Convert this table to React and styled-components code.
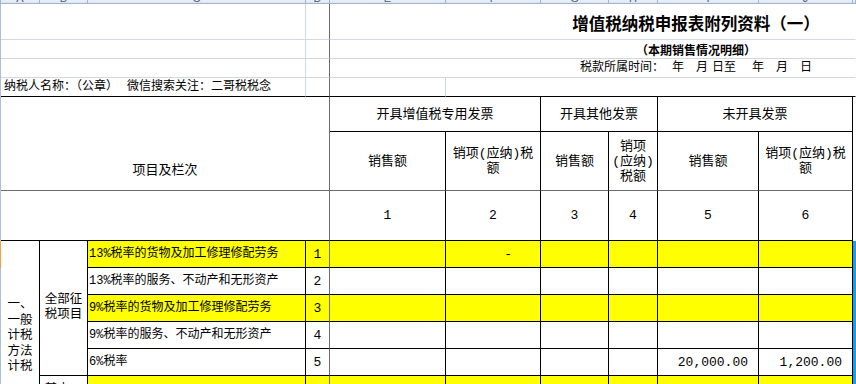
import React from "react";
import styled, { createGlobalStyle } from "styled-components";

const GRID = "#d0d7e5";
const INK = "#000";
const FREEZE = "#6b6b6b";
const YELLOW = "#ffff00";
const FONT = `"Liberation Mono", "Noto Sans CJK SC", sans-serif`;

const GlobalStyle = createGlobalStyle`
  html, body {
    margin: 0;
    padding: 0;
    background: #fff;
    overflow: hidden;
  }
  body {
    font-family: ${FONT};
    color: #000;
  }
`;

const Sheet = styled.div`
  width: 856px;
  height: 384px;
  overflow: hidden;
  display: grid;
  grid-template-columns: 1px 39px 48px 218px 24px 116px 95px 68px 49px 101px 94px 3px;
  grid-template-rows: 4px 36px 19px 19px 19px 35px 59px 50px 27px 27px 27px 27px 27px 40px;
`;

const Cell = styled.div`
  grid-column: ${(p) => p.$c};
  grid-row: ${(p) => p.$r};
  box-sizing: border-box;
  display: flex;
  align-items: center;
  justify-content: center;
  text-align: center;
  background: ${(p) => p.$bg || "#fff"};
  border-right: 1px solid ${(p) => p.$br || "transparent"};
  border-bottom: 1px solid ${(p) => p.$bb || "transparent"};
  font-size: 12px;
  line-height: 15px;
  white-space: nowrap;
  overflow: hidden;
`;

const ColHead = styled(Cell)`
  background: linear-gradient(#eaf0f7, #dce5f0);
  border-right: 1px solid #9eb6ce;
  border-bottom: 1px solid #9eb6ce;
  align-items: flex-end;
  font-family: "Liberation Sans", sans-serif;
  font-size: 11px;
  color: #4a5d75;

  span {
    line-height: 14px;
    margin-bottom: -2px;
  }
`;

const Strip = styled(Cell)`
  background: ${(p) => (p.$on ? "#f2a13f" : "#a9c0da")};
`;

const TitleCell = styled(Cell)`
  padding-left: 207px;
  padding-top: 3px;
  font-family: "Noto Sans CJK SC", sans-serif;
  font-weight: 700;
  font-size: 16.5px;
  line-height: 20px;
`;

const SubTitle = styled(Cell)`
  padding-left: 207px;
  font-family: "Noto Sans CJK SC", sans-serif;
  font-weight: 700;
  font-size: 12px;
`;

const Period = styled(Cell)`
  padding-left: 207px;
`;

const Gap = styled.span`
  margin-left: ${(p) => p.$w}px;
`;

const InfoCell = styled(Cell)`
  justify-content: flex-start;
  padding-left: 3px;
`;

const HeadCell = styled(Cell)`
  font-size: 13px;
  line-height: 15px;
`;

const ItemsHead = styled(HeadCell)`
  align-items: flex-end;
  padding-bottom: 12px;
`;

const GroupCell = styled(Cell)`
  align-items: ${(p) => (p.$top ? "flex-start" : "center")};
  padding-top: ${(p) => p.$pt || 0}px;
  font-size: 12.5px;
  line-height: ${(p) => p.$lh || 15}px;
`;

const ItemName = styled(Cell)`
  justify-content: flex-start;
  padding-left: 1px;
`;

const Amount = styled(Cell)`
  justify-content: flex-end;
  padding-right: ${(p) => p.$pr || 10}px;
  font-size: 13px;
`;

const Edge = styled(Cell)`
  background: ${(p) => (p.$on ? "#17a0e3" : "#fff")};
`;

const letters = [
  ["1 / 2", ""],
  ["2 / 3", "A"],
  ["3 / 4", "B"],
  ["4 / 5", "C"],
  ["5 / 6", "D"],
  ["6 / 7", "E"],
  ["7 / 8", "F"],
  ["8 / 9", "G"],
  ["9 / 10", "H"],
  ["10 / 11", "I"],
  ["11 / 12", "J"],
  ["12 / 13", ""],
];

const groups = [
  { c: "6 / 8", t: "开具增值税专用发票" },
  { c: "8 / 10", t: "开具其他发票" },
  { c: "10 / 12", t: "未开具发票" },
];

const subs = [
  ["销售额"],
  ["销项(应纳)税", "额"],
  ["销售额"],
  ["销项", "(应纳)", "税额"],
  ["销售额"],
  ["销项(应纳)税", "额"],
];

const items = [
  { name: "13%税率的货物及加工修理修配劳务", hi: true, vals: { 1: { t: "-", pr: 28 } } },
  { name: "13%税率的服务、不动产和无形资产" },
  { name: "9%税率的货物及加工修理修配劳务", hi: true },
  { name: "9%税率的服务、不动产和无形资产" },
  { name: "6%税率", vals: { 4: { t: "20,000.00" }, 5: { t: "1,200.00" } } },
];

const lines = (arr) =>
  arr.map((l, i) => (
    <React.Fragment key={i}>
      {i > 0 && <br />}
      {l}
    </React.Fragment>
  ));

export default function App() {
  return (
    <>
      <GlobalStyle />
      <Sheet>
        {letters.map(([c, l], i) => (
          <ColHead key={i} $c={c} $r="1 / 2">
            <span>{l}</span>
          </ColHead>
        ))}

        <Strip $c="1 / 2" $r="2 / 9" />
        <Strip $c="1 / 2" $r="9 / 10" $on />
        <Strip $c="1 / 2" $r="10 / 15" />

        {/* top left blank rows */}
        {[2, 3, 4].map((r) => (
          <React.Fragment key={r}>
            <Cell $c="2 / 5" $r={`${r} / ${r + 1}`} $br={GRID} $bb={GRID} />
            <Cell $c="5 / 6" $r={`${r} / ${r + 1}`} $br={FREEZE} $bb={GRID} />
          </React.Fragment>
        ))}
        <InfoCell $c="2 / 5" $r="5 / 6" $br={GRID} $bb={INK}>
          纳税人名称：（公章）
          <Gap $w={9}>微信搜索关注：二哥税税念</Gap>
        </InfoCell>
        <Cell $c="5 / 6" $r="5 / 6" $br={FREEZE} $bb={INK} />

        {/* title block */}
        <TitleCell $c="6 / 13" $r="2 / 3" $bb={GRID}>
          增值税纳税申报表附列资料（一）
        </TitleCell>
        <SubTitle $c="6 / 13" $r="3 / 4" $bb={GRID}>
          （本期销售情况明细）
        </SubTitle>
        <Period $c="6 / 13" $r="4 / 5" $bb={GRID}>
          <span>税款所属时间：</span>
          <Gap $w={8}>年</Gap>
          <Gap $w={12}>月</Gap>
          <Gap $w={4}>日至</Gap>
          <Gap $w={16}>年</Gap>
          <Gap $w={12}>月</Gap>
          <Gap $w={12}>日</Gap>
        </Period>
        <Cell $c="6 / 7" $r="5 / 6" $br={GRID} $bb={INK} />
        <Cell $c="7 / 13" $r="5 / 6" $bb={INK} />

        {/* table header */}
        <ItemsHead $c="2 / 6" $r="6 / 8" $br={FREEZE} $bb={FREEZE}>
          项目及栏次
        </ItemsHead>
        <Cell $c="2 / 6" $r="8 / 9" $br={FREEZE} $bb={INK} />
        {groups.map((g) => (
          <HeadCell key={g.c} $c={g.c} $r="6 / 7" $br={INK} $bb={INK}>
            {g.t}
          </HeadCell>
        ))}
        {subs.map((s, i) => (
          <HeadCell key={i} $c={`${6 + i} / ${7 + i}`} $r="7 / 8" $br={INK} $bb={FREEZE}>
            <div>{lines(s)}</div>
          </HeadCell>
        ))}
        {subs.map((_, i) => (
          <HeadCell key={i} $c={`${6 + i} / ${7 + i}`} $r="8 / 9" $br={INK} $bb={INK}>
            {i + 1}
          </HeadCell>
        ))}
        <Edge $c="12 / 13" $r="6 / 9" />

        {/* body */}
        <GroupCell $c="2 / 3" $r="9 / 15" $br={INK} $top $pt={57} $lh={15.5}>
          <div>{lines(["一、", "一般", "计税", "方法", "计税"])}</div>
        </GroupCell>
        <GroupCell $c="3 / 4" $r="9 / 14" $br={INK} $bb={INK}>
          <div>{lines(["全部征", "税项目"])}</div>
        </GroupCell>
        <GroupCell $c="3 / 4" $r="14 / 15" $br={INK} $top $pt={7}>
          <div>{lines(["其中：", "即征即", "退项目"])}</div>
        </GroupCell>

        {items.map((it, i) => {
          const r = `${9 + i} / ${10 + i}`;
          const bg = it.hi ? YELLOW : "#fff";
          return (
            <React.Fragment key={i}>
              <ItemName $c="4 / 5" $r={r} $bg={bg} $br={INK} $bb={INK}>
                {it.name}
              </ItemName>
              <HeadCell $c="5 / 6" $r={r} $bg={bg} $br={FREEZE} $bb={INK}>
                {i + 1}
              </HeadCell>
              {subs.map((_, j) => {
                const v = it.vals && it.vals[j];
                return (
                  <Amount
                    key={j}
                    $c={`${6 + j} / ${7 + j}`}
                    $r={r}
                    $bg={bg}
                    $br={INK}
                    $bb={INK}
                    $pr={v && v.pr}
                  >
                    {v ? v.t : ""}
                  </Amount>
                );
              })}
            </React.Fragment>
          );
        })}

        <ItemName $c="4 / 5" $r="14 / 15" $bg={YELLOW} $br={INK} />
        <Cell $c="5 / 6" $r="14 / 15" $bg={YELLOW} $br={FREEZE} />
        {subs.map((_, j) => (
          <Cell key={j} $c={`${6 + j} / ${7 + j}`} $r="14 / 15" $bg={YELLOW} $br={INK} />
        ))}
        <Edge $c="12 / 13" $r="9 / 15" $on />
      </Sheet>
    </>
  );
}
